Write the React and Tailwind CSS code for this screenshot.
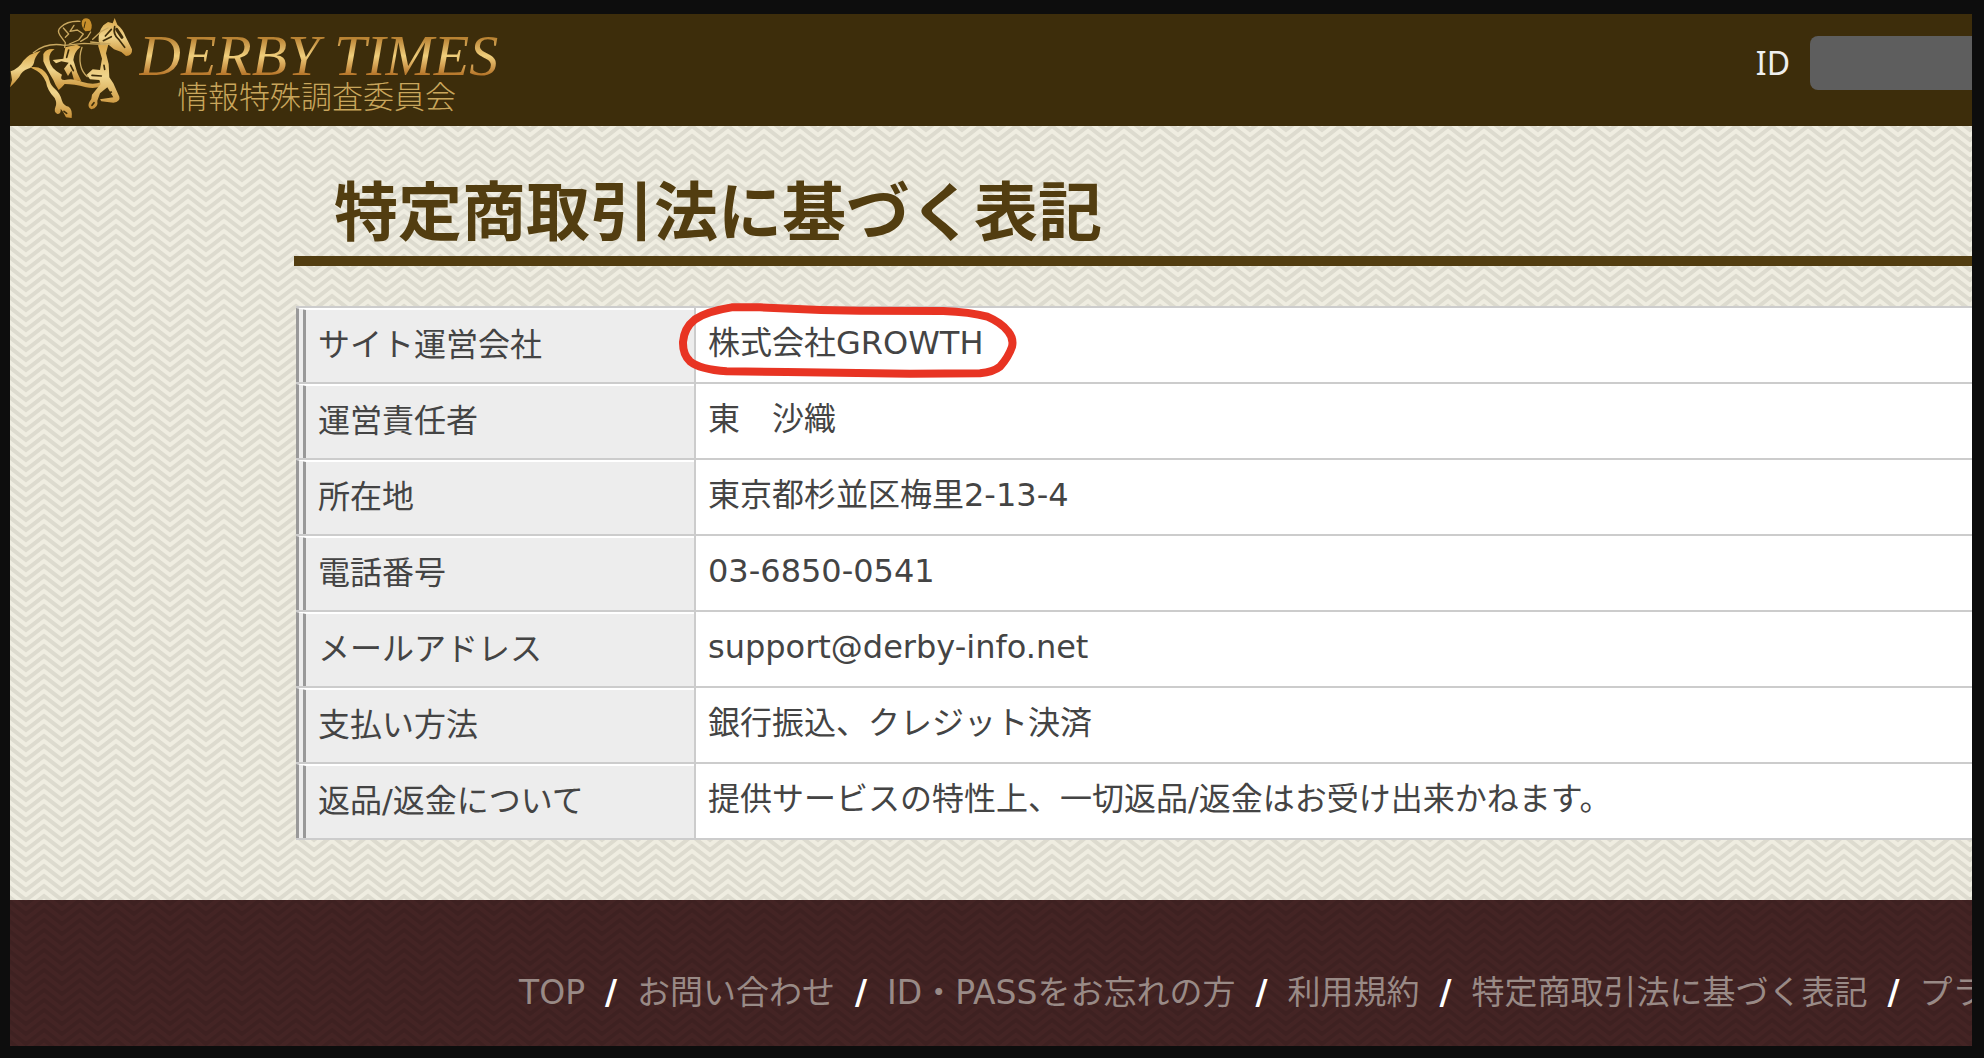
import { useId } from "react";

const rows = [
	{ label: "サイト運営会社", value: "株式会社GROWTH", circled: true },
	{ label: "運営責任者", value: "東　沙織" },
	{ label: "所在地", value: "東京都杉並区梅里2-13-4" },
	{ label: "電話番号", value: "03-6850-0541" },
	{ label: "メールアドレス", value: "support@derby-info.net" },
	{ label: "支払い方法", value: "銀行振込、クレジット決済" },
	{ label: "返品/返金について", value: "提供サービスの特性上、一切返品/返金はお受け出来かねます。" },
];

const links = [
	"TOP",
	"お問い合わせ",
	"ID・PASSをお忘れの方",
	"利用規約",
	"特定商取引法に基づく表記",
	"プライバシーポリシー",
];

// zigzag texture behind the content and the footer
function Chevrons({ color }) {
	const id = useId();
	return (
		<svg className="absolute inset-0 h-full w-full" aria-hidden="true">
			<defs>
				<pattern id={id} width="36" height="10" patternUnits="userSpaceOnUse">
					{[-20, -10, 0, 10].map((y) => (
						<path key={y} d={`M-20 ${y + 14}L-2 ${y}L16 ${y + 14}L34 ${y}L52 ${y + 14}`} fill="none" stroke={color} strokeWidth="4" />
					))}
				</pattern>
			</defs>
			<rect width="100%" height="100%" fill={`url(#${id})`} />
		</svg>
	);
}

function Horse() {
	return (
		<svg viewBox="30 42 375 333" className="h-[111px] w-[125px] shrink-0" aria-hidden="true">
			<defs>
				<linearGradient id="gold" x1="0" y1="0" x2="0" y2="1">
					<stop offset="0" stopColor="#d9a648" />
					<stop offset="0.5" stopColor="#f0d58c" />
					<stop offset="1" stopColor="#c88f35" />
				</linearGradient>
			</defs>
			<g fill="url(#gold)">
				{/* tail */}
				<path d="M30 262L36 240L32 214Q58 204 70 182Q88 160 122 152Q104 170 102 188Q98 202 84 206Q66 212 58 230Q46 246 30 262Z" />
				{/* hind leg */}
				<path d="M90 202Q112 198 126 208Q144 222 148 240Q152 256 166 268Q180 280 186 302Q190 316 206 320Q218 328 215 354L198 352Q190 334 182 326Q184 342 172 342Q160 336 166 322Q172 310 164 294Q142 272 138 246Q128 222 110 212Z" />
				{/* flank and belly */}
				<path d="M130 162Q140 144 164 148Q146 158 148 178Q150 206 186 224Q178 240 194 240Q222 234 248 246Q280 256 304 246L318 256Q288 268 258 262Q222 252 194 252Q186 262 176 270Q166 256 160 240Q138 204 130 184Z" />
				{/* saddle */}
				<path d="M196 142L230 134L242 140Q222 156 220 180L232 218L244 244L222 240L214 212L204 228L192 206L206 188L184 184L168 190L158 180L190 176Z" />
				{/* chest and forelegs */}
				<path d="M294 136L326 130L318 160L326 192L328 232L340 250L358 290Q362 304 340 308L304 304L300 298L340 292L322 262L300 280L292 302Q296 322 274 328Q260 322 268 306Q276 298 276 284L302 252L298 240L270 238L260 224L278 208L300 210L306 176Z" />
				{/* head */}
				<path d="M296 124Q294 96 310 76L324 66L338 70L344 54L352 74Q368 86 376 108L396 148Q398 168 378 168L364 156L342 148L326 134L304 136Z" />
			</g>
			{/* cap */}
			<path d="M246 62Q254 50 268 58Q280 74 272 92L256 94Q242 80 246 62Z" fill="#c98f2b" />
			<g fill="none" stroke="#c9a860" strokeWidth="4" strokeLinecap="round" strokeLinejoin="round">
				<path d="M240 64Q202 62 182 82Q170 92 180 106L196 128L194 142" />
				<path d="M190 84L206 102L196 112M222 76L210 94L232 90L250 102L236 120L208 132" />
				<path d="M272 96L262 112L242 124M278 118L304 94L324 84M272 126L330 132" />
				<path d="M100 158Q140 126 194 136L252 130L318 134" />
				<path d="M246 142Q236 170 242 196Q246 216 262 230" />
			</g>
			<g fill="none" stroke="#3d2d0b" strokeWidth="5" strokeLinecap="round">
				<path d="M344 80Q338 104 356 118L374 142M334 88L316 108M310 122L334 110" />
				<path d="M350 88L366 112" strokeWidth="9" />
				<path d="M206 150L200 172M212 196L220 212M312 196L314 208M276 226L304 228" />
				<path d="M312 286L334 276M282 308L276 316M192 334L200 340M164 164L160 172" />
				<path d="M256 66L252 84" strokeWidth="3" />
			</g>
		</svg>
	);
}

function Logo() {
	return (
		<a href="#top" className="flex">
			<Horse />
			<span className="flex flex-col items-center pt-3 pl-1">
				<span className="bg-linear-to-b from-[#b98232] from-20% via-[#f0cf7c] via-50% to-[#b9792c] to-80% bg-clip-text pr-1 font-['Liberation_Serif',serif] text-[58px] leading-[60px] whitespace-nowrap text-transparent italic">
					DERBY TIMES
				</span>
				<span className="-mt-1 pr-2 text-[31px] leading-none font-light whitespace-nowrap text-[#c9a65c]">情報特殊調査委員会</span>
			</span>
		</a>
	);
}

// hand-drawn marker around the company name
function RedCircle() {
	return (
		<svg viewBox="0 0 1140 300" className="pointer-events-none absolute -top-4 -left-9 h-[100px] w-[380px]" aria-hidden="true">
			<path
				d="M215 46L300 46Q450 54 600 56L850 57Q930 60 982 74Q1024 92 1044 118Q1062 140 1056 164Q1046 194 1020 224Q1000 240 960 244L750 245L380 240L200 238Q120 232 90 208Q68 188 69 150Q72 108 105 82Q140 58 215 46Z"
				fill="none"
				stroke="#e83423"
				strokeWidth="24"
				strokeLinejoin="round"
			/>
		</svg>
	);
}

export default function App() {
	return (
		<div className="flex min-h-screen flex-col overflow-hidden bg-[#0d0d0d] pt-3.5 pr-3 pb-3 pl-2.5 font-['DejaVu_Sans','Noto_Sans_CJK_JP',sans-serif] text-[32px] text-[#444]">
			<header className="flex h-28 justify-between overflow-hidden bg-[#3d2d0b]">
				<Logo />
				<div className="flex items-center gap-5 pb-3.5">
					<label htmlFor="login-id" className="font-['Noto_Sans',sans-serif] text-[#eee]">
						ID
					</label>
					<input id="login-id" type="text" className="h-[54px] w-[162px] rounded-l-lg bg-[#5e5e5e] px-3 text-white outline-none" />
				</div>
			</header>

			<main className="relative bg-[#efede1] pb-[60px] pl-[284px]">
				<Chevrons color="#dddbcf" />
				<div className="relative">
					<h1 className="border-b-10 border-[#523d10] pt-11 pl-10 text-[64px] leading-[86px] font-bold whitespace-nowrap text-[#523d10]">
						特定商取引法に基づく表記
					</h1>
					<table className="mt-10 ml-0.5 w-[calc(100%-2px)] border-collapse text-left">
						<tbody>
							{rows.map((row) => (
								<tr key={row.label} className="h-[76px] border-y-2 border-[#ccc]">
									<th className="w-[399px] border-r-2 border-r-[#ccc] bg-[#ededed] p-0 font-normal">
										<div className="flex h-[74px] items-center border-t-2 border-l-10 border-t-white border-l-[#999] pb-0.5 pl-3 [border-left-style:double]">
											{row.label}
										</div>
									</th>
									<td className="relative bg-white px-3 pb-1 whitespace-nowrap">
										{row.value}
										{row.circled && <RedCircle />}
									</td>
								</tr>
							))}
						</tbody>
					</table>
				</div>
			</main>

			<footer className="relative flex-1 bg-[#442424]">
				<Chevrons color="#3e2121" />
				<nav className="relative overflow-hidden pt-[69px] pl-[509px]">
					<ul className="flex text-[33px] leading-[48px] whitespace-nowrap">
						{links.map((link, i) => (
							<li key={link} className="flex">
								{i > 0 && <span className="w-[52px] text-center font-bold text-white">/</span>}
								<a href="#" className="text-[#998a86]">
									{link}
								</a>
							</li>
						))}
					</ul>
				</nav>
			</footer>
		</div>
	);
}
